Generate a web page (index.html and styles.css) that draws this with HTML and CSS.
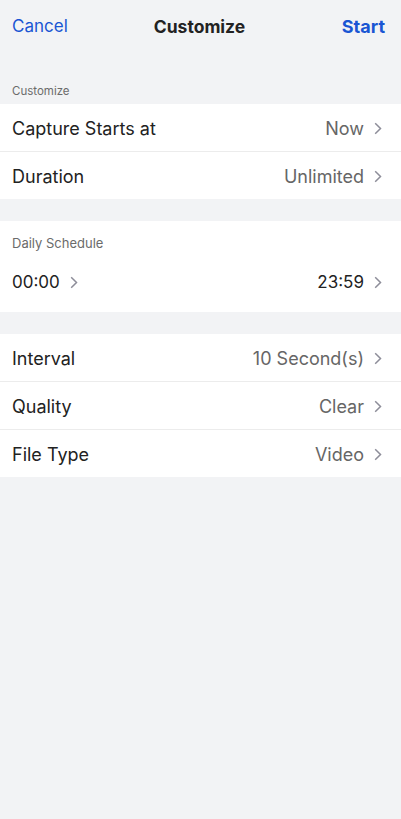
FILE: index.html
```html
<!DOCTYPE html>
<html>
<head>
<meta charset="utf-8">
<link rel="stylesheet" href="styles.css">
</head>
<body>
<div class="page">
  <header class="nav">
    <span class="nav-btn cancel">Cancel</span>
    <span class="nav-title">Customize</span>
    <span class="nav-btn start">Start</span>
  </header>

  <div class="section-label">Customize</div>
  <div class="card">
    <div class="row">
      <span class="row-label">Capture Starts at</span>
      <span class="row-value">Now<svg class="chev" viewBox="0 0 8 13"><path d="M1.2 1.2l5.3 5.3-5.3 5.3"/></svg></span>
    </div>
    <div class="row">
      <span class="row-label">Duration</span>
      <span class="row-value">Unlimited<svg class="chev" viewBox="0 0 8 13"><path d="M1.2 1.2l5.3 5.3-5.3 5.3"/></svg></span>
    </div>
  </div>

  <div class="card schedule">
    <div class="card-label">Daily Schedule</div>
    <div class="row time-row">
      <span class="time">00:00<svg class="chev" viewBox="0 0 8 13"><path d="M1.2 1.2l5.3 5.3-5.3 5.3"/></svg></span>
      <span class="time">23:59<svg class="chev" viewBox="0 0 8 13"><path d="M1.2 1.2l5.3 5.3-5.3 5.3"/></svg></span>
    </div>
  </div>

  <div class="card third">
    <div class="row">
      <span class="row-label">Interval</span>
      <span class="row-value">10 Second(s)<svg class="chev" viewBox="0 0 8 13"><path d="M1.2 1.2l5.3 5.3-5.3 5.3"/></svg></span>
    </div>
    <div class="row">
      <span class="row-label">Quality</span>
      <span class="row-value">Clear<svg class="chev" viewBox="0 0 8 13"><path d="M1.2 1.2l5.3 5.3-5.3 5.3"/></svg></span>
    </div>
    <div class="row">
      <span class="row-label">File Type</span>
      <span class="row-value">Video<svg class="chev" viewBox="0 0 8 13"><path d="M1.2 1.2l5.3 5.3-5.3 5.3"/></svg></span>
    </div>
  </div>
</div>
</body>
</html>
```

FILE: styles.css
```css
html, body {
  margin: 0;
  padding: 0;
  background: #f2f3f5;
}
body {
  font-family: Inter, Roboto, "Noto Sans", Arial, sans-serif;
  color: #222;
}
.page {
  min-height: 819px;
  display: flex;
  flex-direction: column;
}
.nav {
  height: 52px;
  display: grid;
  grid-template-columns: 1fr auto 1fr;
  align-items: center;
  padding: 0 16px 0 12px;
}
.nav-btn {
  font-size: 17px;
  color: #1a56d3;
}
.cancel {
  justify-self: start;
}
.start {
  justify-self: end;
  font-size: 18px;
  font-weight: 700;
}
.nav-title {
  font-size: 17.5px;
  font-weight: 700;
  color: #222;
  padding-left: 2px;
}
.section-label {
  height: 52px;
  box-sizing: border-box;
  display: flex;
  align-items: flex-end;
  padding: 0 12px 5px;
  font-size: 11.5px;
  line-height: 16px;
  color: #6b6b6b;
}
.card {
  background: #fff;
  margin-bottom: 22px;
}
.card.schedule {
  padding-bottom: 6px;
  margin-bottom: 22px;
}
.card-label {
  padding: 14px 12px 7px;
  font-size: 13px;
  line-height: 16px;
  color: #6b6b6b;
}
.row {
  height: 47px;
  box-sizing: border-box;
  display: flex;
  align-items: center;
  justify-content: space-between;
  padding: 2px 19px 0 12px;
  font-size: 18px;
}
.row + .row {
  height: 48px;
  border-top: 1px solid #ececec;
}
.card.third .row {
  height: 48px;
}
.card.third .row:first-child {
  height: 47px;
}
.time-row {
  height: 48px;
  padding-top: 0;
}
.row-label {
  color: #222;
}
.row-value {
  display: flex;
  align-items: center;
  color: #666;
}
.time {
  display: flex;
  align-items: center;
  color: #222;
  font-size: 17px;
}
.chev {
  width: 8px;
  height: 13px;
  margin-left: 10px;
  fill: none;
  stroke: #8d8d99;
  stroke-width: 1.5;
}
```
